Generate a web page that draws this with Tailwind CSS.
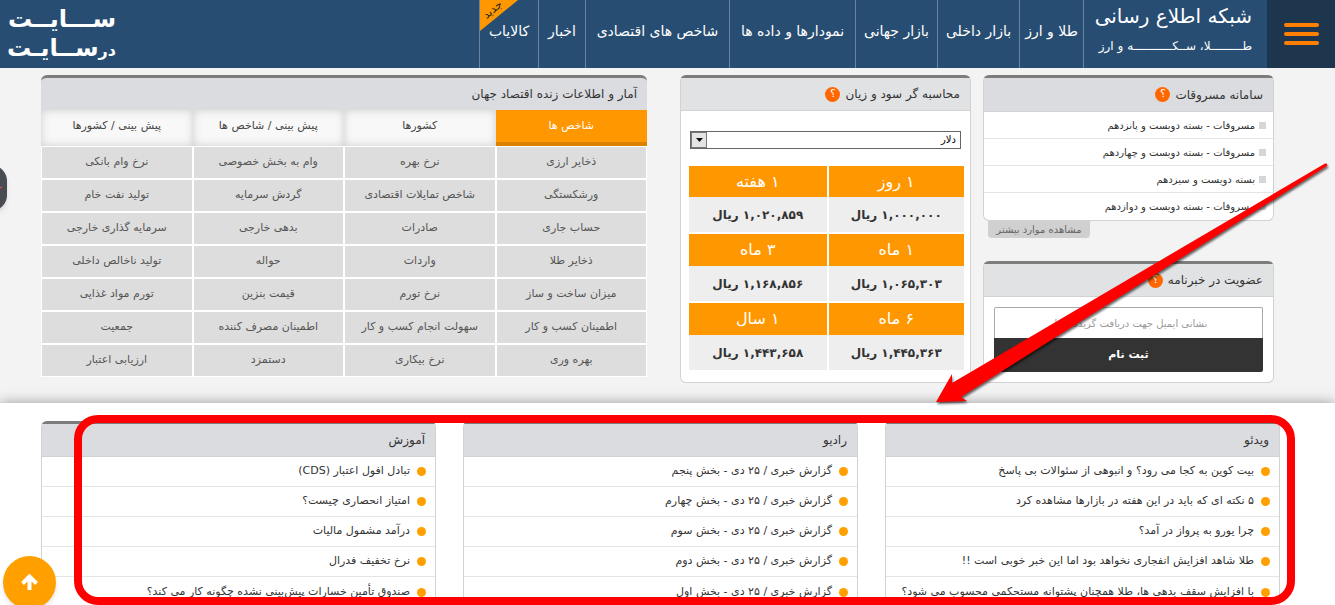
<!DOCTYPE html>
<html lang="fa" dir="rtl">
<head>
<meta charset="utf-8">
<meta name="viewport" content="width=device-width, initial-scale=1">
<title>شبکه اطلاع رسانی طلا، سکه و ارز</title>
<script src="https://cdn.jsdelivr.net/npm/@tailwindcss/browser@4"></script>
</head>
<body class="relative h-screen overflow-hidden bg-[#f3f3f3] font-['DejaVu_Sans',sans-serif] text-[#333]">

<header class="flex h-[68px] bg-[#284d72] text-white">
  <button type="button" aria-label="منو" class="flex w-[68px] shrink-0 flex-col items-center justify-center gap-[5px] bg-[#1e354e]">
    <span class="h-1 w-[35px] rounded-xs bg-[#ff8000]"></span>
    <span class="h-1 w-[35px] rounded-xs bg-[#ff8000]"></span>
    <span class="h-1 w-[35px] rounded-xs bg-[#ff8000]"></span>
  </button>
  <a href="#" class="flex w-[183px] shrink-0 flex-col items-start pr-[15px] whitespace-nowrap">
    <span class="text-xl leading-8">شبکه اطلاع رسانی</span>
    <span class="text-xs leading-7">طـــــــــلا، ســکـــــــــــه و ارز</span>
  </a>
  <nav class="flex shrink-0 text-sm whitespace-nowrap">
    <a href="#" class="flex w-16 justify-center border-r border-[#6b859e] pt-[21px]">طلا و ارز</a>
    <a href="#" class="flex w-[82px] justify-center border-r border-[#6b859e] pt-[21px]">بازار داخلی</a>
    <a href="#" class="flex w-[82px] justify-center border-r border-[#6b859e] pt-[21px]">بازار جهانی</a>
    <a href="#" class="flex w-[126px] justify-center border-r border-[#6b859e] pt-[21px]">نمودارها و داده ها</a>
    <a href="#" class="flex w-36 justify-center border-r border-[#6b859e] pt-[21px]">شاخص های اقتصادی</a>
    <a href="#" class="flex w-[47px] justify-center border-r border-[#6b859e] pt-[21px]">اخبار</a>
    <a href="#" class="relative flex w-[60px] justify-center border-x border-[#6b859e] pt-[21px]">
      <svg class="absolute top-0 left-0 h-[31px] w-[38px]" viewBox="0 0 38 31" aria-hidden="true"><path d="M0 0H38L0 31Z" fill="#ff9800"/></svg>
      <span class="absolute top-0 left-0.5 -rotate-40 text-[11px] leading-5 text-[#222]">جدید</span>
      کالایاب
    </a>
  </nav>
  <a href="#" aria-label="سایت در سایت" class="mr-auto">
    <svg class="h-[68px] w-[120px]" viewBox="0 0 120 68" font-family="DejaVu Sans" font-weight="bold" fill="#fff" direction="rtl">
      <text x="116" y="27" font-size="24">ســـایــت</text>
      <text x="116" y="56" font-size="24"><tspan font-size="16">در</tspan>ســایـت</text>
    </svg>
  </a>
</header>

<main>
  <div class="flex items-start pt-[7px] pr-[61px] pb-5 pl-[41px]">
    <div class="w-[291px] shrink-0">
      <section class="rounded-md border border-t-3 border-[#d2d2d2] border-t-[#7c7c7c] bg-white">
        <h2 class="flex h-[34px] items-center gap-[5px] border-b border-[#d2d2d2] bg-[#dbdce0] px-2.5 text-xs">سامانه مسروقات
          <span class="flex size-[15px] items-center justify-center rounded-full bg-[#ff6600] text-[11px] text-white">؟</span></h2>
        <ul class="divide-y divide-[#e5e5e5] text-[10px]">
          <li class="flex h-[27px] items-center gap-1 pr-[7px]"><span class="size-[7px] bg-[#d6d6d6]"></span><a href="#">مسروقات - بسته دویست و پانزدهم</a></li>
          <li class="flex h-[27px] items-center gap-1 pr-[7px]"><span class="size-[7px] bg-[#d6d6d6]"></span><a href="#">مسروقات - بسته دویست و چهاردهم</a></li>
          <li class="flex h-[27px] items-center gap-1 pr-[7px]"><span class="size-[7px] bg-[#d6d6d6]"></span><a href="#">بسته دویست و سیزدهم</a></li>
          <li class="flex h-[27px] items-center gap-1 pr-[7px]"><span class="size-[7px] bg-[#d6d6d6]"></span><a href="#">مسروقات - بسته دویست و دوازدهم</a></li>
        </ul>
      </section>
      <div class="flex justify-end pl-[5px]"><a href="#" class="flex h-[17px] w-[102px] items-center justify-center rounded-b bg-[#d0d0d0] text-[10px] whitespace-nowrap text-[#666]">مشاهده موارد بیشتر</a></div>
      <section class="mt-[23px] rounded-md border border-t-3 border-[#d2d2d2] border-t-[#7c7c7c] bg-white">
        <h2 class="flex h-[33px] items-center gap-[5px] border-b border-[#d2d2d2] bg-[#e1e2e4] px-2.5 text-xs">عضویت در خبرنامه
          <span class="flex size-[15px] items-center justify-center rounded-full bg-[#ff6600] text-[11px] text-white">؟</span></h2>
        <form class="flex flex-col p-2.5">
          <input type="email" dir="rtl" aria-label="نشانی ایمیل" placeholder="نشانی ایمیل جهت دریافت گزیده اخبار" class="h-[31px] rounded-t-xs border border-b-0 border-[#aaa] text-center text-[10px] placeholder:text-[#999]">
          <button type="button" class="h-[34px] rounded-b-xs bg-[#333] text-[11px] font-bold text-white">ثبت نام</button>
        </form>
      </section>
    </div>

    <section class="mr-3 w-[291px] shrink-0 rounded-md border border-t-3 border-[#d2d2d2] border-t-[#7c7c7c] bg-white">
      <h2 class="flex h-[33px] items-center gap-[5px] border-b border-[#d2d2d2] bg-[#e1e2e4] px-2.5 text-xs">محاسبه گر سود و زیان
        <span class="flex size-[15px] items-center justify-center rounded-full bg-[#ff6600] text-[11px] text-white">؟</span></h2>
      <div class="px-[9px] pt-5 pb-3">
        <div class="relative">
          <select aria-label="ارز" class="block h-[18px] w-full appearance-none border border-[#666] bg-white pr-1 text-[10px] leading-4 text-black"><option>دلار</option></select>
          <span class="pointer-events-none absolute inset-y-px left-px flex w-4 items-center justify-center border border-[#777] bg-[#e4e4e4]"><svg class="h-1 w-[7px]" viewBox="0 0 7 4"><path d="M0 0H7L3.500 4Z" fill="#111"/></svg></span>
        </div>
        <table class="mt-[17px] -mr-[3px] w-[275px] table-fixed border-separate border-spacing-0 text-center">
          <tr class="h-[31px] bg-[#ff9800] text-base text-white"><th class="border-l-2 border-white font-normal">۱ روز</th><th class="font-normal">۱ هفته</th></tr>
          <tr class="h-[37px] bg-[#eee] text-xs font-bold"><td class="border-b-2 border-l-2 border-white">۱,۰۰۰,۰۰۰ ریال</td><td class="border-b-2 border-white">۱,۰۲۰,۸۵۹ ریال</td></tr>
          <tr class="h-8 bg-[#ff9800] text-base text-white"><th class="border-l-2 border-white font-normal">۱ ماه</th><th class="font-normal">۳ ماه</th></tr>
          <tr class="h-[37px] bg-[#eee] text-xs font-bold"><td class="border-b-2 border-l-2 border-white">۱,۰۶۵,۳۰۳ ریال</td><td class="border-b-2 border-white">۱,۱۶۸,۸۵۶ ریال</td></tr>
          <tr class="h-8 bg-[#ff9800] text-base text-white"><th class="border-l-2 border-white font-normal">۶ ماه</th><th class="font-normal">۱ سال</th></tr>
          <tr class="h-[35px] bg-[#eee] text-xs font-bold"><td class="border-l-2 border-white">۱,۴۴۵,۳۶۳ ریال</td><td>۱,۴۴۳,۶۵۸ ریال</td></tr>
        </table>
      </div>
    </section>

    <section class="mr-[33px] min-w-0 flex-1">
      <h2 class="flex h-[35px] items-center rounded-t-md border-t-3 border-[#7c7c7c] bg-[#dbdce0] px-2.5 text-xs">آمار و اطلاعات زنده اقتصاد جهان</h2>
      <div role="tablist" class="grid h-9 grid-cols-4 text-[11px] text-[#444]">
        <button type="button" role="tab" aria-selected="true" class="border-b-4 border-[#dc8000] bg-[#ff9800] text-white">شاخص ها</button>
        <button type="button" role="tab" aria-selected="false" class="bg-[#f8f8f8] pb-1 shadow-[inset_0_0_8px_#ccc]">کشورها</button>
        <button type="button" role="tab" aria-selected="false" class="bg-[#f8f8f8] pb-1 shadow-[inset_0_0_8px_#ccc]">پیش بینی / شاخص ها</button>
        <button type="button" role="tab" aria-selected="false" class="bg-[#f8f8f8] pb-1 shadow-[inset_0_0_8px_#ccc]">پیش بینی / کشورها</button>
      </div>
      <table class="w-full table-fixed border-separate border-spacing-0 bg-[#ddd] text-center text-[11px] text-[#555] [&_td]:border [&_td]:border-white">
        <tr class="h-[33px]"><td>ذخایر ارزی</td><td>نرخ بهره</td><td>وام به بخش خصوصی</td><td>نرخ وام بانکی</td></tr>
        <tr class="h-[33px]"><td>ورشکستگی</td><td>شاخص تمایلات اقتصادی</td><td>گردش سرمایه</td><td>تولید نفت خام</td></tr>
        <tr class="h-[33px]"><td>حساب جاری</td><td>صادرات</td><td>بدهی خارجی</td><td>سرمایه گذاری خارجی</td></tr>
        <tr class="h-[33px]"><td>ذخایر طلا</td><td>واردات</td><td>حواله</td><td>تولید ناخالص داخلی</td></tr>
        <tr class="h-[33px]"><td>میزان ساخت و ساز</td><td>نرخ تورم</td><td>قیمت بنزین</td><td>تورم مواد غذایی</td></tr>
        <tr class="h-[33px]"><td>اطمینان کسب و کار</td><td>سهولت انجام کسب و کار</td><td>اطمینان مصرف کننده</td><td>جمعیت</td></tr>
        <tr class="h-[33px]"><td>بهره وری</td><td>نرخ بیکاری</td><td>دستمزد</td><td>ارزیابی اعتبار</td></tr>
      </table>
    </section>
  </div>

  <div class="grid grid-cols-3 gap-[27px] bg-white pt-[18px] pr-[55px] pb-6 pl-[41px] shadow-[0_0_12px_#999]">
    <section class="rounded-md border border-t-3 border-[#d2d2d2] border-t-[#7c7c7c] bg-white">
      <h2 class="flex h-[33px] items-center border-b border-[#d2d2d2] bg-[#dbdce0] px-2.5 text-xs">ویدئو</h2>
      <ul class="divide-y divide-[#e5e5e5] text-[11px] whitespace-nowrap">
        <li class="flex h-[30px] items-center gap-[7px] px-[9px]"><span class="size-[9px] rounded-full bg-[#ffa000]"></span><a href="#">بیت کوین به کجا می رود؟ و انبوهی از سئوالات بی پاسخ</a></li>
        <li class="flex h-[30px] items-center gap-[7px] px-[9px]"><span class="size-[9px] rounded-full bg-[#ffa000]"></span><a href="#">۵ نکته ای که باید در این هفته در بازارها مشاهده کرد</a></li>
        <li class="flex h-[30px] items-center gap-[7px] px-[9px]"><span class="size-[9px] rounded-full bg-[#ffa000]"></span><a href="#">چرا یورو به پرواز در آمد؟</a></li>
        <li class="flex h-[30px] items-center gap-[7px] px-[9px]"><span class="size-[9px] rounded-full bg-[#ffa000]"></span><a href="#">طلا شاهد افزایش انفجاری نخواهد بود اما این خبر خوبی است !!</a></li>
        <li class="flex h-[30px] items-center gap-[7px] px-[9px]"><span class="size-[9px] rounded-full bg-[#ffa000]"></span><a href="#">با افزایش سقف بدهی ها، طلا همچنان پشتوانه مستحکمی محسوب می شود؟</a></li>
      </ul>
    </section>
    <section class="rounded-md border border-t-3 border-[#d2d2d2] border-t-[#7c7c7c] bg-white">
      <h2 class="flex h-[33px] items-center border-b border-[#d2d2d2] bg-[#dbdce0] px-2.5 text-xs">رادیو</h2>
      <ul class="divide-y divide-[#e5e5e5] text-[11px] whitespace-nowrap">
        <li class="flex h-[30px] items-center gap-[7px] px-[9px]"><span class="size-[9px] rounded-full bg-[#ffa000]"></span><a href="#">گزارش خبری / ۲۵ دی - بخش پنجم</a></li>
        <li class="flex h-[30px] items-center gap-[7px] px-[9px]"><span class="size-[9px] rounded-full bg-[#ffa000]"></span><a href="#">گزارش خبری / ۲۵ دی - بخش چهارم</a></li>
        <li class="flex h-[30px] items-center gap-[7px] px-[9px]"><span class="size-[9px] rounded-full bg-[#ffa000]"></span><a href="#">گزارش خبری / ۲۵ دی - بخش سوم</a></li>
        <li class="flex h-[30px] items-center gap-[7px] px-[9px]"><span class="size-[9px] rounded-full bg-[#ffa000]"></span><a href="#">گزارش خبری / ۲۵ دی - بخش دوم</a></li>
        <li class="flex h-[30px] items-center gap-[7px] px-[9px]"><span class="size-[9px] rounded-full bg-[#ffa000]"></span><a href="#">گزارش خبری / ۲۵ دی - بخش اول</a></li>
      </ul>
    </section>
    <section class="rounded-md border border-t-3 border-[#d2d2d2] border-t-[#7c7c7c] bg-white">
      <h2 class="flex h-[33px] items-center border-b border-[#d2d2d2] bg-[#dbdce0] px-2.5 text-xs">آموزش</h2>
      <ul class="divide-y divide-[#e5e5e5] text-[11px] whitespace-nowrap">
        <li class="flex h-[30px] items-center gap-[7px] px-[9px]"><span class="size-[9px] rounded-full bg-[#ffa000]"></span><a href="#">تبادل افول اعتبار (CDS)</a></li>
        <li class="flex h-[30px] items-center gap-[7px] px-[9px]"><span class="size-[9px] rounded-full bg-[#ffa000]"></span><a href="#">امتیاز انحصاری چیست؟</a></li>
        <li class="flex h-[30px] items-center gap-[7px] px-[9px]"><span class="size-[9px] rounded-full bg-[#ffa000]"></span><a href="#">درآمد مشمول مالیات</a></li>
        <li class="flex h-[30px] items-center gap-[7px] px-[9px]"><span class="size-[9px] rounded-full bg-[#ffa000]"></span><a href="#">نرخ تخفیف فدرال</a></li>
        <li class="flex h-[30px] items-center gap-[7px] px-[9px]"><span class="size-[9px] rounded-full bg-[#ffa000]"></span><a href="#">صندوق تأمین خسارات پیش‌بینی نشده چگونه کار می کند؟</a></li>
      </ul>
    </section>
  </div>
</main>

<button type="button" aria-label="پنل کناری" class="absolute top-[165px] -left-[39px] size-[46px] rounded-2xl bg-[#484c52] shadow-md"><span class="absolute top-[22px] left-[39px] h-px w-0.5 bg-[#ff5030]"></span></button>
<button type="button" aria-label="بازگشت به بالا" class="absolute top-[556px] left-[3px] flex size-[53px] items-center justify-center rounded-full bg-[#ffa000] shadow-md">
  <svg class="size-[17px]" viewBox="0 0 17 17" fill="none" stroke="#fff" stroke-width="4"><path d="M8.500 16V3M1.500 9.500L8.500 2.500L15.500 9.500"/></svg>
</button>

<div class="pointer-events-none absolute top-[415px] right-10 bottom-0 left-[74px] rounded-[24px] border-8 border-[#f00]"></div>
<svg class="pointer-events-none absolute top-[155px] right-0 h-[255px] w-[405px] drop-shadow-[1px_2px_1px_rgba(0,0,0,0.6)]" viewBox="930 155 405 255" aria-hidden="true">
  <path d="M936 402L952 374V383L1325 163.500Q1328 163 1327 166L961 397L967 401Z" fill="#f00"/>
</svg>
</body>
</html>
